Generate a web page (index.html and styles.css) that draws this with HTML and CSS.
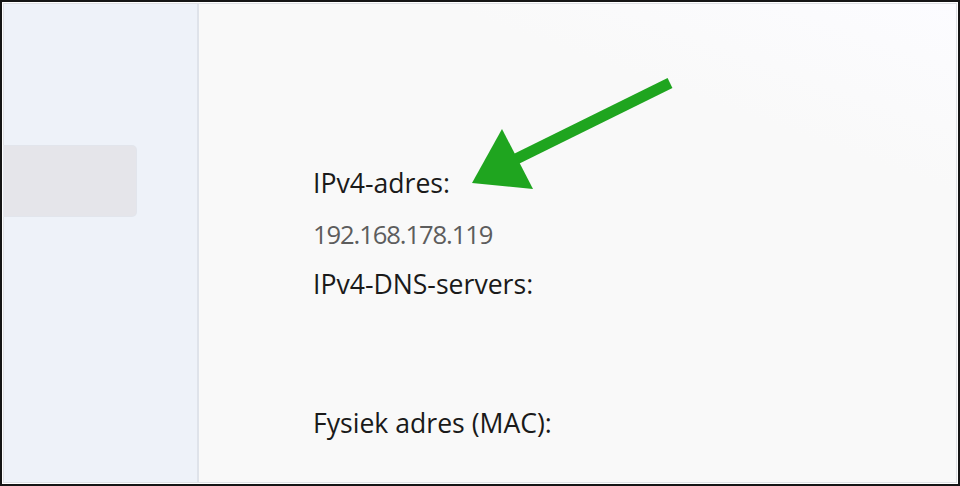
FILE: index.html
```html
<!DOCTYPE html>
<html lang="nl">
<head>
<meta charset="utf-8">
<title>Netwerkeigenschappen</title>
<link rel="stylesheet" href="styles.css">
</head>
<body>
<div class="frame">
  <div class="window">
    <aside class="sidebar">
      <div class="nav-item selected"></div>
    </aside>
    <main class="content">
      <div class="props">
        <div class="label first">IPv4-adres:</div>
        <div class="value">192.168.178.119</div>
        <div class="label dns">IPv4-DNS-servers:</div>
        <div class="label mac">Fysiek adres (MAC):</div>
      </div>
      <svg class="arrow" width="220" height="130" viewBox="0 0 220 130" aria-hidden="true">
        <line x1="210" y1="13" x2="52" y2="91" stroke="#1fa51f" stroke-width="11" stroke-linecap="butt"/>
        <polygon points="42,59 12,113 73,119" fill="#1fa51f"/>
      </svg>
    </main>
  </div>
</div>
</body>
</html>
```
FILE: styles.css
```css
html, body {
  margin: 0;
  padding: 0;
  width: 960px;
  height: 486px;
  overflow: hidden;
}
body {
  font-family: "Open Sans", "Noto Sans", "Liberation Sans", sans-serif;
  background: #141414;
}
.frame {
  box-sizing: border-box;
  width: 960px;
  height: 486px;
  border: 2px solid #151515;
  background: #ffffff;
  padding: 1px;
}
.window {
  box-sizing: border-box;
  height: 100%;
  border: 1px solid #dfe1e5;
  display: flex;
}
.sidebar {
  width: 193px;
  flex: none;
  background: #eef2f9;
  border-right: 2px solid #dfe3ea;
  padding-top: 142px;
}
.nav-item {
  width: 132px;
  height: 70px;
  border-radius: 0 4px 4px 0;
}
.nav-item.selected {
  background: #e5e5ea;
  box-shadow: 0 0 0 1px #e2e5ec;
}
.content {
  flex: 1;
  position: relative;
  background: linear-gradient(200deg, #fcfcff 0%, #f9f9f9 25%, #f9f9f9 100%);
  padding-left: 114px;
}
.props {
  padding-top: 154px;
}
.label, .value {
  font-size: 26.6px;
  line-height: 50px;
  height: 50px;
  color: #1a1a1a;
  white-space: nowrap;
}
.label.first {
  height: 52px;
}
.value {
  color: #5d5d5d;
  font-size: 25.6px;
  letter-spacing: -1.1px;
  height: 49px;
}
.label.mac {
  margin-top: 89px;
}
.arrow {
  position: absolute;
  left: 261px;
  top: 66px;
}
```
